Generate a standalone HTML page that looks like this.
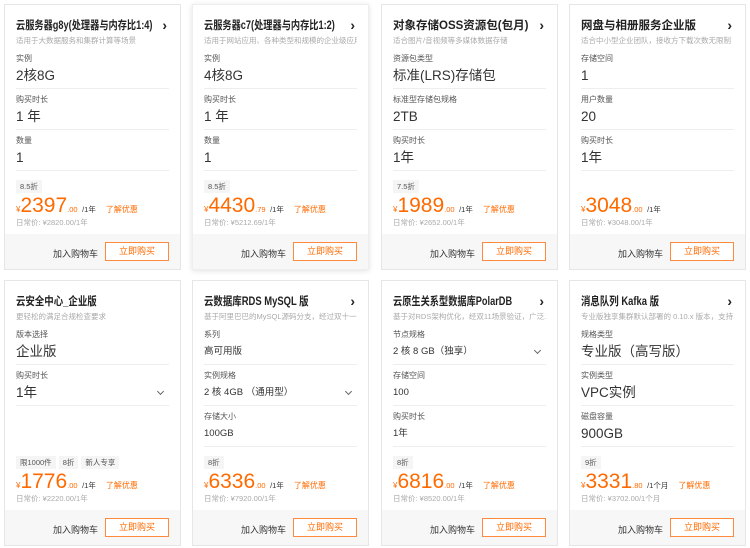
<!DOCTYPE html>
<html><head><meta charset="utf-8"><style>
*{margin:0;padding:0;box-sizing:border-box}
body{width:750px;height:548px;background:#fff;font-family:"Liberation Sans","Noto Sans CJK SC",sans-serif;color:#333;position:relative;overflow:hidden}
.card{position:absolute;width:177px;height:266px;border:1px solid #e6e6e6;background:#fff}
.card.hl{border-color:#eee;box-shadow:0 1px 5px rgba(0,0,0,.12)}
.in{padding:0 11px}
.t{font-size:11.5px;font-weight:bold;color:#222;margin-top:13px;height:16px;line-height:16px;position:relative;white-space:nowrap}
.t span{display:inline-block;transform-origin:left center}
.t:after{content:"›";position:absolute;right:2px;top:-1px;font-size:14px;font-weight:bold}
.t.na:after{content:""}
.s{font-size:7.5px;color:#aaa;height:14px;line-height:14px;white-space:nowrap;overflow:hidden}
.f{border-bottom:1px solid #eee;height:41px;padding-top:4px;position:relative}
.l{font-size:8px;color:#555;height:14px;line-height:14px}
.v{font-size:13.5px;color:#333;height:20px;line-height:20px;white-space:nowrap}
.v.sm{font-size:9.5px}
.dd:after{content:"";position:absolute;right:6px;top:24px;width:4px;height:4px;border-right:1px solid #666;border-bottom:1px solid #666;transform:rotate(45deg)}
.pa{position:absolute;left:11px;bottom:40px;width:160px}
.tag{display:inline-block;background:#f5f5f5;font-size:7.5px;color:#555;height:13px;line-height:13px;padding:0 4px;margin-right:3px}
.pr{color:#ff6a00;height:22px;line-height:22px;white-space:nowrap;margin-top:1px}
.pr .y{font-size:8px}.pr .n{font-size:21px}.pr .d{font-size:7.5px}.pr .u{font-size:7.5px;color:#333}
.pr .k{font-size:8px;margin-left:10px}
.rg{font-size:7.5px;color:#aaa;height:12px;line-height:12px;margin-top:0}
.ft{position:absolute;left:0;right:0;bottom:0;height:35px;background:#f7f7f7}
.ca{position:absolute;right:82px;top:13px;font-size:9px;color:#333}
.bt{position:absolute;right:11px;top:8px;width:64px;height:19px;border:1px solid #ff8a3d;background:#fff;color:#ff6a00;font-size:9px;text-align:center;line-height:17px}
</style></head><body>

<div class="card" style="left:4px;top:4px">
<div class="in"><div class="t"><span style="transform:scaleX(.8)">云服务器g8y(处理器与内存比1:4)</span></div><div class="s">适用于大数据服务和集群计算等场景</div>
<div class="f"><div class="l">实例</div><div class="v">2核8G</div></div>
<div class="f"><div class="l">购买时长</div><div class="v">1 年</div></div>
<div class="f"><div class="l">数量</div><div class="v">1</div></div></div>
<div class="pa"><span class="tag">8.5折</span><div class="pr"><span class="y">¥</span><span class="n">2397</span><span class="d">.00</span> <span class="u">/1年</span><span class="k">了解优惠</span></div><div class="rg">日常价: ¥2820.00/1年</div></div>
<div class="ft"><span class="ca">加入购物车</span><span class="bt">立即购买</span></div></div>

<div class="card hl" style="left:192px;top:4px">
<div class="in"><div class="t"><span style="transform:scaleX(.8)">云服务器c7(处理器与内存比1:2)</span></div><div class="s">适用于网站应用、各种类型和规模的企业级应用</div>
<div class="f"><div class="l">实例</div><div class="v">4核8G</div></div>
<div class="f"><div class="l">购买时长</div><div class="v">1 年</div></div>
<div class="f"><div class="l">数量</div><div class="v">1</div></div></div>
<div class="pa"><span class="tag">8.5折</span><div class="pr"><span class="y">¥</span><span class="n">4430</span><span class="d">.79</span> <span class="u">/1年</span><span class="k">了解优惠</span></div><div class="rg">日常价: ¥5212.69/1年</div></div>
<div class="ft"><span class="ca">加入购物车</span><span class="bt">立即购买</span></div></div>

<div class="card" style="left:381px;top:4px">
<div class="in"><div class="t"><span>对象存储OSS资源包(包月)</span></div><div class="s">适合图片/音视频等多媒体数据存储</div>
<div class="f"><div class="l">资源包类型</div><div class="v">标准(LRS)存储包</div></div>
<div class="f"><div class="l">标准型存储包规格</div><div class="v">2TB</div></div>
<div class="f"><div class="l">购买时长</div><div class="v">1年</div></div></div>
<div class="pa"><span class="tag">7.5折</span><div class="pr"><span class="y">¥</span><span class="n">1989</span><span class="d">.00</span> <span class="u">/1年</span><span class="k">了解优惠</span></div><div class="rg">日常价: ¥2652.00/1年</div></div>
<div class="ft"><span class="ca">加入购物车</span><span class="bt">立即购买</span></div></div>

<div class="card" style="left:569px;top:4px">
<div class="in"><div class="t"><span>网盘与相册服务企业版</span></div><div class="s">适合中小型企业团队，接收方下载次数无限制</div>
<div class="f"><div class="l">存储空间</div><div class="v">1</div></div>
<div class="f"><div class="l">用户数量</div><div class="v">20</div></div>
<div class="f"><div class="l">购买时长</div><div class="v">1年</div></div></div>
<div class="pa"><div class="pr"><span class="y">¥</span><span class="n">3048</span><span class="d">.00</span> <span class="u">/1年</span></div><div class="rg">日常价: ¥3048.00/1年</div></div>
<div class="ft"><span class="ca">加入购物车</span><span class="bt">立即购买</span></div></div>

<div class="card" style="left:4px;top:280px">
<div class="in"><div class="t na"><span style="transform:scaleX(.82)">云安全中心_企业版</span></div><div class="s">更轻松的满足合规检查要求</div>
<div class="f"><div class="l">版本选择</div><div class="v">企业版</div></div>
<div class="f dd"><div class="l">购买时长</div><div class="v">1年</div></div></div>
<div class="pa"><span class="tag">限1000件</span><span class="tag">8折</span><span class="tag">新人专享</span><div class="pr"><span class="y">¥</span><span class="n">1776</span><span class="d">.00</span> <span class="u">/1年</span><span class="k">了解优惠</span></div><div class="rg">日常价: ¥2220.00/1年</div></div>
<div class="ft"><span class="ca">加入购物车</span><span class="bt">立即购买</span></div></div>

<div class="card" style="left:192px;top:280px">
<div class="in"><div class="t"><span style="transform:scaleX(.82)">云数据库RDS MySQL 版</span></div><div class="s">基于阿里巴巴的MySQL源码分支，经过双十一...</div>
<div class="f"><div class="l">系列</div><div class="v sm">高可用版</div></div>
<div class="f dd"><div class="l">实例规格</div><div class="v sm">2 核 4GB （通用型）</div></div>
<div class="f"><div class="l">存储大小</div><div class="v sm">100GB</div></div></div>
<div class="pa"><span class="tag">8折</span><div class="pr"><span class="y">¥</span><span class="n">6336</span><span class="d">.00</span> <span class="u">/1年</span><span class="k">了解优惠</span></div><div class="rg">日常价: ¥7920.00/1年</div></div>
<div class="ft"><span class="ca">加入购物车</span><span class="bt">立即购买</span></div></div>

<div class="card" style="left:381px;top:280px">
<div class="in"><div class="t"><span style="transform:scaleX(.8)">云原生关系型数据库PolarDB</span></div><div class="s">基于对RDS架构优化，经双11场景验证，广泛...</div>
<div class="f dd"><div class="l">节点规格</div><div class="v sm">2 核 8 GB（独享）</div></div>
<div class="f"><div class="l">存储空间</div><div class="v sm">100</div></div>
<div class="f"><div class="l">购买时长</div><div class="v sm">1年</div></div></div>
<div class="pa"><span class="tag">8折</span><div class="pr"><span class="y">¥</span><span class="n">6816</span><span class="d">.00</span> <span class="u">/1年</span><span class="k">了解优惠</span></div><div class="rg">日常价: ¥8520.00/1年</div></div>
<div class="ft"><span class="ca">加入购物车</span><span class="bt">立即购买</span></div></div>

<div class="card" style="left:569px;top:280px">
<div class="in"><div class="t"><span style="transform:scaleX(.82)">消息队列 Kafka 版</span></div><div class="s">专业版独享集群默认部署的 0.10.x 版本，支持...</div>
<div class="f"><div class="l">规格类型</div><div class="v">专业版（高写版）</div></div>
<div class="f"><div class="l">实例类型</div><div class="v">VPC实例</div></div>
<div class="f"><div class="l">磁盘容量</div><div class="v">900GB</div></div></div>
<div class="pa"><span class="tag">9折</span><div class="pr"><span class="y">¥</span><span class="n">3331</span><span class="d">.80</span> <span class="u">/1个月</span><span class="k">了解优惠</span></div><div class="rg">日常价: ¥3702.00/1个月</div></div>
<div class="ft"><span class="ca">加入购物车</span><span class="bt">立即购买</span></div></div>

</body></html>
